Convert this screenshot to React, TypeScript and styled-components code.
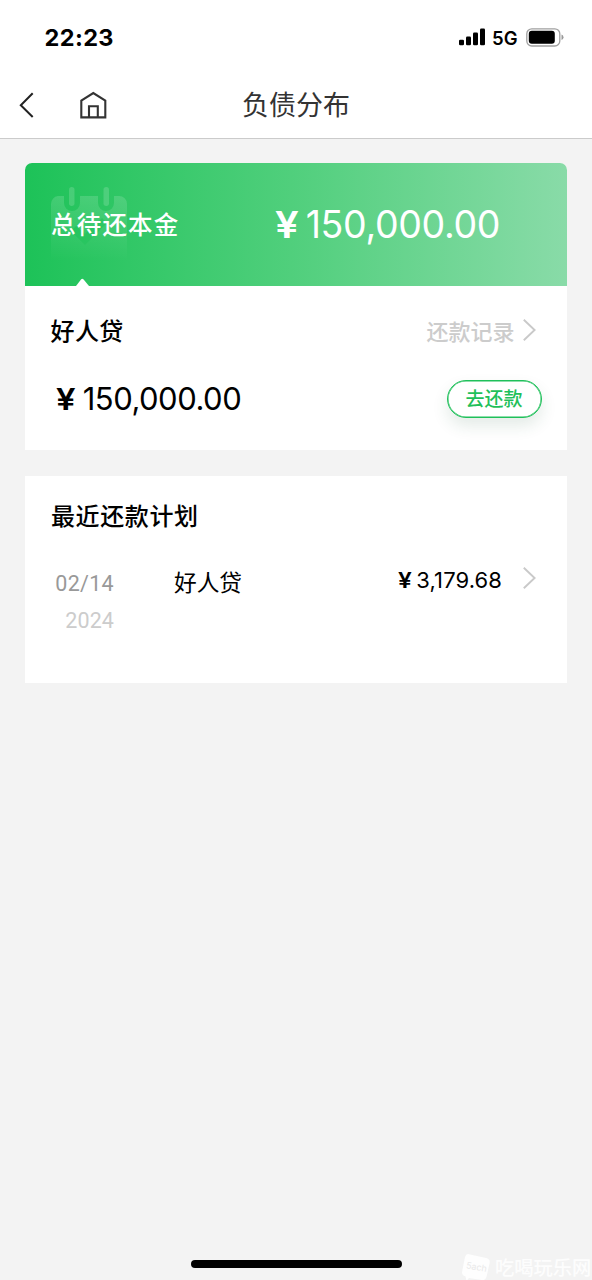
import React from "react";
import styled, { createGlobalStyle } from "styled-components";

const cjk = `"Noto Sans CJK SC", sans-serif`;
const latin = `Inter, "Noto Sans CJK SC", sans-serif`;

const GlobalStyle = createGlobalStyle`
  * { box-sizing: border-box; }
  body { margin: 0; background: #f3f3f3; font-family: ${cjk}; color: #000; }
  svg { display: block; flex: none; }
`;

const Screen = styled.div`
  position: relative;
  width: 592px;
  height: 1280px;
  overflow: hidden;
  display: flex;
  flex-direction: column;
  background: #f3f3f3;
`;

const Header = styled.header`
  height: 139px;
  flex: none;
  background: #fff;
  border-bottom: 1px solid #cbcbcb;
`;

const StatusBar = styled.div`
  height: 74px;
  padding: 0 28px 0 44.5px;
  display: flex;
  align-items: center;
  justify-content: space-between;
`;

const Label = styled.span<{
  $size: number;
  $weight?: number;
  $color?: string;
  $spacing?: number;
  $font?: string;
}>`
  font-family: ${(p) => p.$font ?? cjk};
  font-size: ${(p) => p.$size}px;
  font-weight: ${(p) => p.$weight ?? 400};
  color: ${(p) => p.$color ?? "#000"};
  letter-spacing: ${(p) => p.$spacing ?? 0}px;
  line-height: 30px;
  white-space: nowrap;
`;

const Clock = styled(Label)`
  padding-top: 2px;
`;

const Yuan = styled(Label)`
  transform: scaleX(1.14);
  transform-origin: left center;
`;

const StatusIcons = styled.div`
  display: flex;
  align-items: center;
`;

const Network = styled(Label)`
  margin: 2px 0 0 6px;
  width: 34px;
`;

const NavBar = styled.nav`
  height: 62px;
  padding-right: 18px;
  display: grid;
  grid-template-columns: 200px 1fr 174px;
  align-items: center;
`;

const NavActions = styled.div`
  display: flex;
  align-items: center;
  gap: 43px;
  padding-left: 17px;
`;

const Title = styled(Label)`
  text-align: center;
  margin: -2px 0 0 -8px;
`;

const Content = styled.main`
  padding: 24px 25px;
  display: flex;
  flex-direction: column;
  gap: 26px;
`;

const Card = styled.section<{ $height: number }>`
  height: ${(p) => p.$height}px;
  background: #fff;
`;

const Summary = styled.div`
  position: relative;
  height: 123px;
  padding: 0 67px 0 26px;
  display: flex;
  align-items: center;
  justify-content: space-between;
  border-radius: 7px 7px 0 0;
  background: linear-gradient(90deg, #1dc258 0%, #50cf7c 49%, #89dba8 100%);
`;

const SummaryCard = styled(Card)`
  border-radius: 7px 7px 0 0;
`;

const CalendarMark = styled.svg`
  position: absolute;
  left: 25px;
  top: 23px;
`;

const Pointer = styled.svg`
  position: absolute;
  left: 51px;
  bottom: 0;
`;

const SummaryLabel = styled(Label)`
  position: relative;
  margin-top: -2px;
`;

const Amount = styled.div<{ $gap: number }>`
  display: flex;
  align-items: center;
  gap: ${(p) => p.$gap}px;
`;

const PlanAmount = styled(Amount)`
  margin-top: -1px;
`;

const LoanRow = styled.div`
  display: flex;
  align-items: center;
  justify-content: space-between;
  padding: 29px 31px 0 25.5px;
`;

const LinkGroup = styled.div`
  display: flex;
  align-items: center;
  gap: 8.5px;
`;

const PayRow = styled.div`
  display: flex;
  align-items: center;
  justify-content: space-between;
  padding: 35px 25.5px 0 31px;
`;

const PayButton = styled.button`
  width: 95px;
  height: 38px;
  padding: 0 0 2px;
  border: 1px solid #1fc05a;
  border-radius: 20px;
  background: #fff;
  box-shadow: inset 0 0 0 0.5px #1fc05a, 0 8px 16px rgba(30, 90, 55, 0.12);
  display: flex;
  align-items: center;
  justify-content: center;
`;

const PlanTitle = styled.div`
  padding: 24px 26px 0;
  display: flex;
`;

const PlanRow = styled.div`
  display: grid;
  grid-template-columns: 119px 1fr auto 34px;
  align-items: start;
  padding: 36px 31px 0 30px;
`;

const DateCell = styled.div`
  display: flex;
  flex-direction: column;
  align-items: flex-end;
  width: 59px;
  gap: 7px;
  padding-top: 3px;
`;

const LoanName = styled(Label)`
  padding-top: 1px;
`;

const RowChevron = styled.div`
  display: flex;
  justify-content: flex-end;
`;

const HomeIndicator = styled.div`
  position: absolute;
  left: 191px;
  bottom: 12px;
  width: 211px;
  height: 8px;
  border-radius: 4px;
  background: #000;
`;

const Watermark = styled.div`
  position: absolute;
  left: 461px;
  top: 1252px;
  display: flex;
  align-items: center;
  gap: 4px;
`;

const Chevron = () => (
  <svg width="13" height="24" viewBox="0 0 13 24" fill="none" stroke="#c9c9c9" strokeWidth="1.9">
    <path d="M0.8 1.7 L11.6 12 L0.8 22.3" />
  </svg>
);

export default function App() {
  return (
    <Screen>
      <GlobalStyle />
      <Header>
        <StatusBar>
          <Clock $font={latin} $size={23.5} $weight={700} $spacing={0.4}>22:23</Clock>
          <StatusIcons>
            <svg width="27" height="18" viewBox="0 0 27 18">
              <rect x="0" y="11.8" width="5" height="5.5" rx="1.3" />
              <rect x="7" y="8.5" width="5" height="8.8" rx="1.3" />
              <rect x="14" y="4.5" width="5" height="12.8" rx="1.3" />
              <rect x="21" y="0.5" width="5" height="16.8" rx="1.3" />
            </svg>
            <Network $font={latin} $size={18.5} $weight={600}>5G</Network>
            <svg width="38" height="19" viewBox="0 0 38 19">
              <rect x="0.8" y="0.8" width="33" height="17.2" rx="5" fill="none" stroke="#a0a0a0" strokeWidth="1.3" />
              <rect x="2.8" y="2.8" width="26" height="13" rx="3" />
              <path d="M35.5 6.5 q2 .8 2 2.8 q0 2 -2 2.8z" fill="#999" />
            </svg>
          </StatusIcons>
        </StatusBar>
        <NavBar>
          <NavActions>
            <svg width="18" height="26" viewBox="0 0 18 26" fill="none" stroke="#222" strokeWidth="2">
              <path d="M15.7 1.2 L3.8 13.2 L15.7 25" />
            </svg>
            <svg width="30" height="28" viewBox="0 0 30 28" fill="none" stroke="#333" strokeWidth="2.1">
              <path d="M3.3 26.4 V9.6 L15.3 2 L27.3 9.6 V26.4 Z" />
              <path d="M11 26 V15.3 H19.8 V26" />
            </svg>
          </NavActions>
          <Title $size={27} $color="#333">负债分布</Title>
        </NavBar>
      </Header>

      <Content>
        <SummaryCard $height={287}>
          <Summary>
            <CalendarMark width="78" height="76" viewBox="0 0 78 76">
              <defs>
                <linearGradient id="calendarFade" x1="0" y1="0" x2="0" y2="1">
                  <stop offset="0" stopColor="#fff" stopOpacity="0.15" />
                  <stop offset="1" stopColor="#fff" stopOpacity="0" />
                </linearGradient>
              </defs>
              <path
                fill="url(#calendarFade)"
                fillRule="evenodd"
                d="M8 10 H14 V17 a8 8 0 0 0 16 0 V10 H48 V17 a8 8 0 0 0 16 0 V10 H69 a8 8 0 0 1 8 8 V75 H1 V18 a8 8 0 0 1 7-8Z M21 45 L35 59 L57 37 L52 32 L35 48 L26 40Z"
              />
              <rect x="19" y="1" width="5.5" height="19" rx="2.7" fill="#fff" opacity="0.16" />
              <rect x="53.5" y="1" width="5.5" height="19" rx="2.7" fill="#fff" opacity="0.16" />
            </CalendarMark>
            <SummaryLabel $size={24.5} $weight={500} $color="#fff" $spacing={1.2}>总待还本金</SummaryLabel>
            <Amount $gap={9.5}>
              <Yuan $font={latin} $size={37} $weight={600} $color="#fff">¥</Yuan>
              <Label $font={latin} $size={37.5} $color="#fff" $spacing={-0.35}>150,000.00</Label>
            </Amount>
            <Pointer width="13" height="8" viewBox="0 0 13 8">
              <path d="M0 8 L5.2 1.3 Q6.3 0.2 7.4 1.3 L13 8Z" fill="#fff" />
            </Pointer>
          </Summary>
          <LoanRow>
            <Label $size={24} $weight={500} $spacing={0.4}>好人贷</Label>
            <LinkGroup>
              <Label $size={22} $weight={500} $color="#ccc">还款记录</Label>
              <Chevron />
            </LinkGroup>
          </LoanRow>
          <PayRow>
            <Amount $gap={9.5}>
              <Yuan $font={latin} $size={30.5} $weight={600}>¥</Yuan>
              <Label $font={latin} $size={31} $spacing={-0.5}>150,000.00</Label>
            </Amount>
            <PayButton>
              <Label $size={19} $weight={500} $color="#1fc05a">去还款</Label>
            </PayButton>
          </PayRow>
        </SummaryCard>

        <Card $height={207}>
          <PlanTitle>
            <Label $size={24} $weight={500} $spacing={0.6}>最近还款计划</Label>
          </PlanTitle>
          <PlanRow>
            <DateCell>
              <Label $font="Roboto, sans-serif" $size={21.5} $color="#999" $spacing={0.3}>02/14</Label>
              <Label $font="Roboto, sans-serif" $size={21.5} $color="#ccc" $spacing={0.1}>2024</Label>
            </DateCell>
            <LoanName $size={22.7}>好人贷</LoanName>
            <PlanAmount $gap={6}>
              <Yuan $font={latin} $size={21.5} $weight={600}>¥</Yuan>
              <Label $font={latin} $size={22} $spacing={0.1}>3,179.68</Label>
            </PlanAmount>
            <RowChevron>
              <Chevron />
            </RowChevron>
          </PlanRow>
        </Card>
      </Content>

      <HomeIndicator />
      <Watermark>
        <svg width="30" height="30" viewBox="0 0 30 30">
          <path
            d="M8 2.2 L25 6 Q29.5 7.2 28.6 11 L25.5 25 Q24.5 28.6 20.5 28 L8 26 L5.5 29 L4.5 24.5 Q.3 23 1.2 19.2 L4 5 Q5 1.5 8 2.2Z"
            fill="#fefefe"
          />
          <text x="5" y="18" fontFamily="Inter, sans-serif" fontSize="9" fill="#e9e9e9" transform="rotate(10 15 15)">5ach</text>
        </svg>
        <Label $size={19.3} $weight={500} $color="#fdfdfd">吃喝玩乐网</Label>
      </Watermark>
    </Screen>
  );
}
